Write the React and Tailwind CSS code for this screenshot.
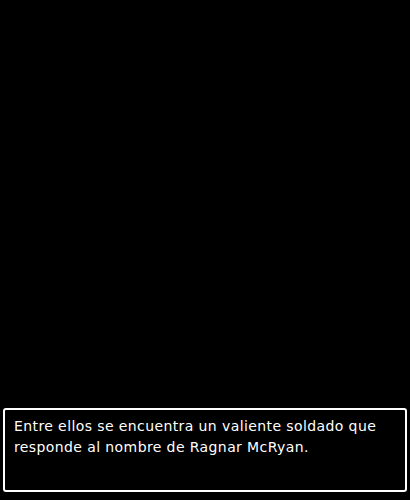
import React from 'react';

const App = () => {
    return (
        <div className="w-[410px] h-[500px] bg-black flex flex-col justify-end px-[3px] pb-[8px]">
            <div className="h-[84px] border-2 border-white rounded-[3px] px-[9px] pt-[6px]">
                <p
                    className="text-white text-[14px] leading-[21px] tracking-[0.4px]"
                    style={{ fontFamily: '"DejaVu Sans", sans-serif' }}
                >
                    Entre ellos se encuentra un valiente soldado que
                    <br />
                    responde al nombre de Ragnar McRyan.
                </p>
            </div>
        </div>
    );
};

export default App;
